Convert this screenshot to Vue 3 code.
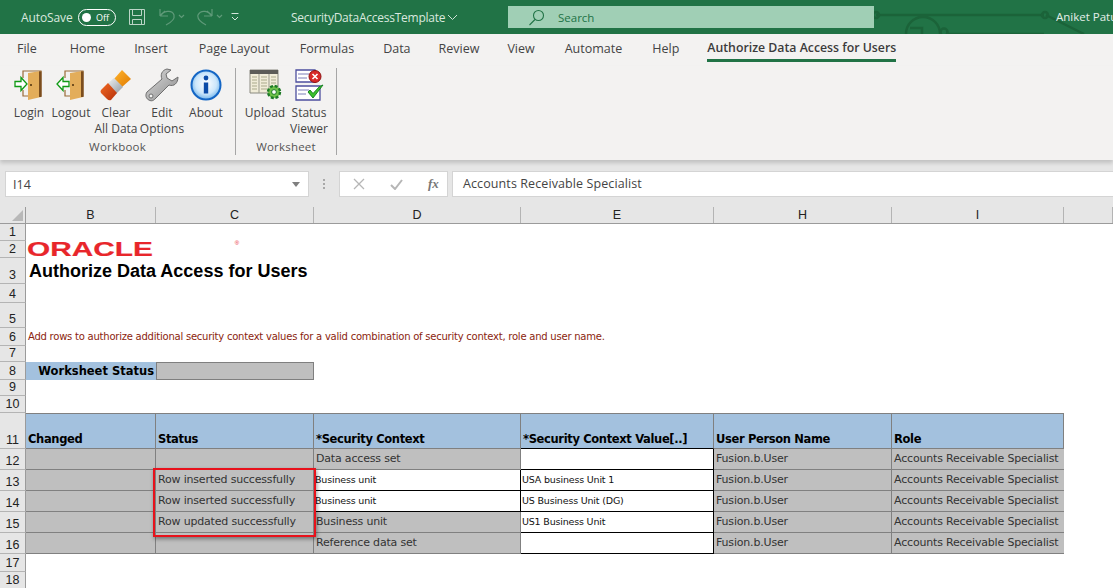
<script setup>
const tabs = [
  { label: 'File', gap: 33 }, { label: 'Home', gap: 29 }, { label: 'Insert', gap: 31 },
  { label: 'Page Layout', gap: 30 }, { label: 'Formulas', gap: 29 }, { label: 'Data', gap: 28 },
  { label: 'Review', gap: 28 }, { label: 'View', gap: 30 }, { label: 'Automate', gap: 30 },
  { label: 'Help', gap: 28 }, { label: 'Authorize Data Access for Users', gap: 0, active: true },
]
const colLetters = ['B', 'C', 'D', 'E', 'H', 'I', '']
const rowHeights = [17, 17, 26, 19, 25, 18, 16, 18, 16, 17, 36, 21, 21, 21, 21, 21, 18, 17]
const rowLabels = rowHeights.map((h, i) => ({ n: i + 1, h }))
const rows = [
  { n: 12, status: '', ctx: 'Data access set', small: false, val: '' },
  { n: 13, status: 'Row inserted successfully', ctx: 'Business unit', small: true, val: 'USA business Unit 1' },
  { n: 14, status: 'Row inserted successfully', ctx: 'Business unit', small: true, val: 'US Business Unit (DG)' },
  { n: 15, status: 'Row updated successfully', ctx: 'Business unit', small: false, val: 'US1 Business Unit' },
  { n: 16, status: '', ctx: 'Reference data set', small: false, val: '' },
]
</script>

<template>
  <div class="app">
    <header class="titlebar">
      <svg class="circuit" width="239" height="34" viewBox="0 0 239 34" fill="none" stroke="#1b6339" stroke-width="2.5">
        <path d="M2 15H170M172 15L210 34M66 34a17 17 0 0 0-34 0M48 34V28H36M72 34H170" />
        <circle cx="2" cy="15" r="3" /><circle cx="171" cy="15" r="3" /><circle cx="70" cy="32" r="3.5" />
      </svg>
      <span class="autosave">AutoSave</span>
      <span class="toggle"><i class="knob"></i><b>Off</b></span>
      <svg class="qa save" width="18" height="18" viewBox="0 0 18 18" fill="none" stroke="#bcd5c7" stroke-width="1">
        <path d="M1.5 1.5H16.5V16.5H1.5ZM4.5 1.5V7.5H13.5V1.5M4.5 16.5V11.5H13.5V16.5" />
      </svg>
      <svg class="qa undo" width="26" height="18" viewBox="0 0 26 18" fill="none" stroke="#5f9a79" stroke-width="1.2">
        <path d="M1 8L6 3M1 8H9M1 8V1M1 8C4 3 13 1 15 7C16 11 11 15 7 17" />
        <path d="M20 7l2.500 2.500L25 7" />
      </svg>
      <svg class="qa redo" width="26" height="18" viewBox="0 0 26 18" fill="none" stroke="#5f9a79" stroke-width="1.200">
        <path d="M15 8L10 3M15 8H7M15 8V1M15 8C12 3 4 1 1 7C0 11 5 15 9 17" />
        <path d="M20 7l2.500 2.500L25 7" />
      </svg>
      <svg class="qa more" width="10" height="10" viewBox="0 0 10 10" fill="none" stroke="#d5e5dc" stroke-width="1">
        <path d="M1.500 1.500H8.500M2 5l3 3 3-3" />
      </svg>
      <span class="docname">SecurityDataAccessTemplate</span>
      <svg class="chev" width="11" height="7" viewBox="0 0 11 7" fill="none" stroke="#cfe2d7" stroke-width="1"><path d="M1 1l4.500 4.500L10 1" /></svg>
      <div class="search">
        <svg width="17" height="17" viewBox="0 0 17 17" fill="none" stroke="#217346" stroke-width="1.100">
          <circle cx="10.500" cy="6.500" r="5" /><path d="M7 10.500L1.500 16" />
        </svg>
        <span>Search</span>
      </div>
      <span class="user">Aniket Patu</span>
    </header>

    <nav class="tabs">
      <span v-for="t in tabs" :key="t.label" class="tab" :class="{ active: t.active }" :style="{ marginRight: t.gap + 'px' }">{{ t.label }}</span>
    </nav>

    <section class="ribbon">
      <div class="group workbook">
        <div class="tools">
          <div class="tool login">
            <svg width="30" height="32" viewBox="0 0 30 32">
              <path d="M9 9V2H27V27H9V21" fill="none" stroke="#9a6a38" stroke-width="1.200" />
              <path d="M14 4L27 2V28L14 31Z" fill="#e3ad5a" /><path d="M25 2.300h2.500V28H25Z" fill="#7a4d1e" />
              <circle cx="17" cy="16" r="1" fill="#4d2f0c" />
              <path d="M1 12.500H7V8.500L13 15L7 21.500V17.500H1Z" fill="#fff" stroke="#0f9a14" stroke-width="1.300" />
            </svg>
            <span>Login</span>
          </div>
          <div class="tool logout">
            <svg width="30" height="32" viewBox="0 0 30 32">
              <path d="M9 9V2H27V27H9V21" fill="none" stroke="#9a6a38" stroke-width="1.200" />
              <path d="M14 4L27 2V28L14 31Z" fill="#e3ad5a" /><path d="M25 2.300h2.500V28H25Z" fill="#7a4d1e" />
              <circle cx="17" cy="16" r="1" fill="#4d2f0c" />
              <path d="M13 12.500H7V8.500L1 15L7 21.500V17.500H13Z" fill="#fff" stroke="#0f9a14" stroke-width="1.300" />
            </svg>
            <span>Logout</span>
          </div>
          <div class="tool clear">
            <svg width="32" height="32" viewBox="0 0 32 32">
              <defs>
                <linearGradient id="er1" x1="0" y1="0" x2="1" y2="1"><stop offset="0" stop-color="#ffb52e" /><stop offset="1" stop-color="#e07a00" /></linearGradient>
                <linearGradient id="er2" x1="0" y1="0" x2="1" y2="1"><stop offset="0" stop-color="#f4f4f4" /><stop offset="1" stop-color="#8e98a0" /></linearGradient>
                <linearGradient id="er3" x1="0" y1="0" x2="1" y2="1"><stop offset="0" stop-color="#f26a22" /><stop offset="1" stop-color="#b5300c" /></linearGradient>
              </defs>
              <path d="M22 1L31 10L22 18L14 10Z" fill="url(#er1)" />
              <path d="M14 9L23 18L16 25L7 15Z" fill="url(#er2)" />
              <path d="M8 14L17 24L11 31Q9 32 7 30L1 24Q0 22 1 21Z" fill="url(#er3)" />
            </svg>
            <span>Clear</span><span>All Data</span>
          </div>
          <div class="tool edit">
            <svg width="34" height="34" viewBox="0 0 34 34">
              <defs><linearGradient id="wr" x1="0" y1="0" x2="1" y2="1"><stop offset="0" stop-color="#dcdcdc" /><stop offset="1" stop-color="#8c8c8c" /></linearGradient></defs>
              <path d="M22 1C17 2 15 7 17 11L2 24C0 27 1 30 3 31.500C6 33.500 8 33 10 31L24 17C29 19 33 15 33 9L27 13L22 10L21 6L26 2Z" fill="url(#wr)" stroke="#6e6e6e" stroke-width="1" />
              <circle cx="6" cy="28" r="2" fill="#f3f3f1" stroke="#6e6e6e" />
            </svg>
            <span>Edit</span><span>Options</span>
          </div>
          <div class="tool about">
            <svg width="32" height="32" viewBox="0 0 32 32">
              <defs><radialGradient id="ab" cx=".5" cy=".45" r=".6"><stop offset="0" stop-color="#ffffff" /><stop offset=".6" stop-color="#cbe6fb" /><stop offset="1" stop-color="#5ba8e6" /></radialGradient></defs>
              <circle cx="16" cy="16" r="14.500" fill="url(#ab)" stroke="#1466c5" stroke-width="2" />
              <circle cx="16" cy="9" r="2.400" fill="#0c4ca8" /><path d="M13.800 13.500H18.200V24.500H13.800Z" fill="#0c4ca8" />
            </svg>
            <span>About</span>
          </div>
        </div>
        <div class="group-name">Workbook</div>
      </div>
      <div class="group worksheet">
        <div class="tools">
          <div class="tool upload">
            <svg width="33" height="32" viewBox="0 0 33 32">
              <path d="M1 1H29V24H1Z" fill="#f0ecd8" stroke="#8a8a80" />
              <path d="M1 1H29V5H1Z" fill="#5c5c58" />
              <path d="M10 5V24M20 5V24" stroke="#9b9b8e" />
              <path d="M3 8H8M3 11H8M3 14H8M3 17H8M3 20H8M12 8H18M12 11H18M12 14H18M12 17H18M12 20H18M22 8H27M22 11H27M22 14H27" stroke="#a9a98a" />
              <circle cx="25" cy="23" r="6" fill="#6fc24a" stroke="#1c7a26" stroke-width="2.400" stroke-dasharray="3 1.700" />
              <circle cx="25" cy="23" r="2.400" fill="#fff" stroke="#1c7a26" />
            </svg>
            <span>Upload</span>
          </div>
          <div class="tool viewer">
            <svg width="29" height="32" viewBox="0 0 29 32">
              <path d="M1 1H20V13H1ZM1 17H25V31H1Z" fill="#fff" stroke="#4d4f9e" stroke-width="1.300" />
              <path d="M3 5H14M3 9H12M3 21H14M3 25H11" stroke="#7c7fb8" />
              <circle cx="20" cy="7.500" r="6" fill="#d92a2a" stroke="#8e1111" />
              <path d="M17.500 5L22.500 10M22.500 5L17.500 10" stroke="#fff" stroke-width="1.600" />
              <path d="M13 23L18 29L28 16L24.500 17.500L18 24.500L15 21Z" fill="#3cc12b" stroke="#0c7a1b" stroke-width=".9" />
            </svg>
            <span>Status</span><span>Viewer</span>
          </div>
        </div>
        <div class="group-name">Worksheet</div>
      </div>
    </section>

    <section class="formula">
      <div class="namebox"><span>I14</span><i class="caret"></i></div>
      <div class="dots"><i></i><i></i><i></i></div>
      <div class="fbtns">
        <svg width="12" height="12" viewBox="0 0 12 12" fill="none" stroke="#b6b6b6" stroke-width="1.300"><path d="M1 1L11 11M11 1L1 11" /></svg>
        <svg width="13" height="11" viewBox="0 0 13 11" fill="none" stroke="#b6b6b6" stroke-width="2"><path d="M1 6L5 10L12 1" /></svg>
        <em>fx</em>
      </div>
      <div class="finput">Accounts Receivable Specialist</div>
    </section>

    <section class="sheet">
      <div class="colhead">
        <div class="corner"><i></i></div>
        <div v-for="c in colLetters" :key="c" class="ch">{{ c }}</div>
      </div>
      <div class="body">
        <div class="rowhead">
          <div v-for="r in rowLabels" :key="r.n" class="rh" :style="{ height: r.h + 'px' }">{{ r.n }}</div>
        </div>
        <div class="cells">
          <div class="logo-row">
            <span class="logo">ORACLE</span><sup class="reg">®</sup>
          </div>
          <h1 class="title">Authorize Data Access for Users</h1>
          <p class="note">Add rows to authorize additional security context values for a valid combination of security context, role and user name.</p>
          <div class="wsrow">
            <div class="wslabel">Worksheet Status</div>
            <div class="wsvalue"></div>
          </div>
          <div class="table">
            <div class="hd">Changed</div>
            <div class="hd">Status</div>
            <div class="hd">*Security Context</div>
            <div class="hd">*Security Context Value[..]</div>
            <div class="hd">User Person Name</div>
            <div class="hd">Role</div>
            <template v-for="r in rows" :key="r.n">
              <div class="td"></div>
              <div class="td">{{ r.status }}</div>
              <div class="td" :class="{ white: r.small }">{{ r.ctx }}</div>
              <div class="td input">{{ r.val }}</div>
              <div class="td">Fusion.b.User</div>
              <div class="td role">Accounts Receivable Specialist</div>
            </template>
            <div class="redbox"></div>
          </div>
        </div>
      </div>
    </section>
  </div>
</template>

<style scoped>
.app { width: 1113px; height: 588px; overflow: hidden; background: #fff; font-family: "Open Sans", "Noto Sans", sans-serif; display: flex; flex-direction: column; color: #3b3b3b; }

.titlebar { flex: 0 0 34px; background: #217346; display: flex; align-items: center; position: relative; color: #d9e8df; font-size: 12px; padding-left: 21px; box-sizing: border-box; overflow: hidden; }
.circuit { position: absolute; left: 874px; top: 0; }
.autosave { width: 57px; letter-spacing: -.1px; }
.toggle { width: 38px; height: 17px; box-sizing: border-box; border: 1.500px solid #fff; border-radius: 9px; display: flex; align-items: center; gap: 5px; padding-left: 3px; font-size: 9px; color: #fff; }
.toggle b { font-weight: 400; }
.knob { width: 9px; height: 9px; background: #fff; border-radius: 50%; }
.qa { flex: none; }
.save { margin-left: 12px; }
.undo { margin-left: 13px; }
.redo { margin-left: 12px; }
.more { margin-left: 7px; }
.docname { margin-left: 51px; width: 152px; white-space: nowrap; letter-spacing: -.25px; }
.chev { margin-left: 4px; }
.search { position: absolute; left: 508px; top: 6px; width: 366px; height: 22px; background: #a0cfb5; display: flex; align-items: center; gap: 13px; padding-left: 20px; box-sizing: border-box; color: #217346; font-size: 11.500px; }
.user { position: absolute; left: 1056px; top: 9px; white-space: nowrap; font-size: 11.500px; color: #e4efe9; }

.tabs { flex: 0 0 32px; background: #f3f2f1; display: flex; padding-left: 17px; font-size: 12.500px; }
.tab { height: 28px; line-height: 29px; white-space: nowrap; color: #444; box-sizing: border-box; }
.tab.active { font-weight: 600; font-size: 12.300px; border-bottom: 3px solid #217346; color: #3b3b3b; height: 28px; line-height: 28px; }

.ribbon { flex: 0 0 94px; background: #f3f2f1; display: flex; box-shadow: 0 3px 4px rgba(0, 0, 0, .16); position: relative; z-index: 2; font-size: 12px; }
.group { display: flex; flex-direction: column; align-items: center; border-right: 1px solid #a6a6a6; margin: 2px 0 5px; box-sizing: border-box; height: 87px; }
.workbook { width: 236px; }
.worksheet { width: 101px; }
.tools { flex: 1; display: flex; width: 100%; }
.tool { display: flex; flex-direction: column; align-items: center; position: relative; line-height: 16px; color: #444; white-space: nowrap; }
.tool svg { height: 34px; margin-bottom: 3px; flex: none; }
.login { width: 42px; margin-left: 8px; }
.logout { width: 42px; }
.clear { width: 48px; }
.edit { width: 44px; }
.about { width: 44px; }
.upload { width: 46px; margin-left: 6px; }
.viewer { width: 42px; }
.group-name { font-size: 11.500px; letter-spacing: .2px; color: #555; height: 16px; line-height: 16px; }

.formula { flex: 0 0 47px; background: #e6e6e6; display: flex; align-items: flex-start; padding: 11px 0 0 5px; box-sizing: border-box; }
.namebox { width: 304px; height: 26px; box-sizing: border-box; background: #fff; border: 1px solid #d4d4d4; display: flex; align-items: center; justify-content: space-between; padding: 0 8px 0 7px; font-size: 12.500px; color: #444; }
.caret { width: 0; height: 0; border: 4px solid transparent; border-top: 5px solid #7f7f7f; border-bottom: 0; }
.dots { width: 30px; height: 26px; display: flex; flex-direction: column; align-items: center; justify-content: center; gap: 2px; }
.dots i { width: 2px; height: 2px; background: #a8a8a8; }
.fbtns { width: 109px; height: 26px; box-sizing: border-box; background: #fff; border: 1px solid #d4d4d4; display: flex; align-items: center; gap: 25px; padding-left: 13px; }
.fbtns em { font-family: "Liberation Serif", serif; font-weight: 700; font-size: 13px; color: #777; }
.finput { margin-left: 4px; flex: 1; height: 26px; box-sizing: border-box; background: #fff; border: 1px solid #d4d4d4; border-right: 0; padding-left: 10px; line-height: 24px; font-size: 12.500px; color: #444; letter-spacing: .1px; }

.sheet { flex: 1; display: flex; flex-direction: column; min-height: 0; }
.colhead { flex: 0 0 17px; display: grid; grid-template-columns: 26px 130px 158px 207px 193px 178px 172px 49px; background: #e6e6e6; border-bottom: 1px solid #9b9b9b; box-sizing: border-box; }
.corner { position: relative; border-right: 1px solid #9b9b9b; }
.corner i { position: absolute; right: 2px; bottom: 2px; width: 0; height: 0; border-left: 11px solid transparent; border-bottom: 11px solid #b8b8b8; }
.ch { border-right: 1px solid #b4b4b4; text-align: center; font: 12.500px/16px "Liberation Sans", sans-serif; color: #222; }
.body { flex: 1; display: flex; min-height: 0; }
.rowhead { width: 26px; flex: none; background: #e6e6e6; }
.rh { box-sizing: border-box; border-right: 1px solid #9b9b9b; border-bottom: 1px solid #b4b4b4; display: flex; align-items: flex-end; justify-content: center; font: 12.500px/15px "Liberation Sans", sans-serif; color: #222; }
.cells { flex: 1; display: flex; flex-direction: column; background: #fff; min-width: 0; overflow: hidden; }
.logo-row { height: 34px; padding: 16px 0 0 1px; box-sizing: border-box; display: flex; align-items: flex-start; }
.logo { font: 700 21px/17px "Liberation Sans", sans-serif; color: #e8262b; transform: scaleX(1.42); transform-origin: left center; -webkit-text-stroke: .2px #e8262b; }
.reg { font: 6px/8px "Liberation Sans", sans-serif; color: #e8262b; margin: -1px 0 0 119px; }
.title { margin: 0; height: 26px; font: 700 18px/26px "Liberation Sans", sans-serif; color: #000; padding-left: 3px; white-space: nowrap; }
.note { margin: 44px 0 0; height: 18px; padding-left: 2px; font: 10px/18px "DejaVu Sans", sans-serif; color: #8b1e0e; white-space: nowrap; letter-spacing: -.23px; }
.wsrow { margin-top: 16px; display: grid; grid-template-columns: 130px 158px; height: 18px; }
.wslabel { background: #a3c1de; text-align: right; padding-right: 2px; font: 700 11.500px/18px "DejaVu Sans", sans-serif; color: #000; box-sizing: border-box; }
.wsvalue { background: #bfbfbf; border: 1px solid #7f7f7f; }
.table { margin-top: 33px; display: grid; grid-template-columns: 130px 158px 207px 193px 178px 172px; grid-template-rows: 36px repeat(5, 21px); position: relative; width: 1038px; }
.hd, .td { box-sizing: border-box; border-right: 1px solid #808080; border-bottom: 1px solid #808080; white-space: nowrap; padding-left: 2px; }
.hd { background: #a3c1de; color: #000; border-top: 1px solid #808080; font: 700 11.500px/15px "DejaVu Sans", sans-serif; display: flex; align-items: flex-end; letter-spacing: -.35px; padding-bottom: 1px; }
.td { background: #bfbfbf; font: 11px/20px "DejaVu Sans", sans-serif; color: #333; letter-spacing: -.18px; }
.td.white { background: #fff; color: #111; border-color: #000; font-size: 9.500px; padding-left: 1px; border-right-color: #000; }
.td.input { background: #fff; border: 1px solid #000; border-top: 0; border-left: 0; color: #111; font-size: 9.500px; padding-left: 1px; }
.hd:nth-child(4) { border-bottom-color: #000; }
.role { overflow: visible; border-right: 0; position: relative; z-index: 1; }
.redbox { position: absolute; left: 127px; top: 55px; width: 163px; height: 69px; box-sizing: border-box; border: 2px solid #e8111b; box-shadow: 1px 2px 4px rgba(0, 0, 0, .4); pointer-events: none; z-index: 2; }
</style>
